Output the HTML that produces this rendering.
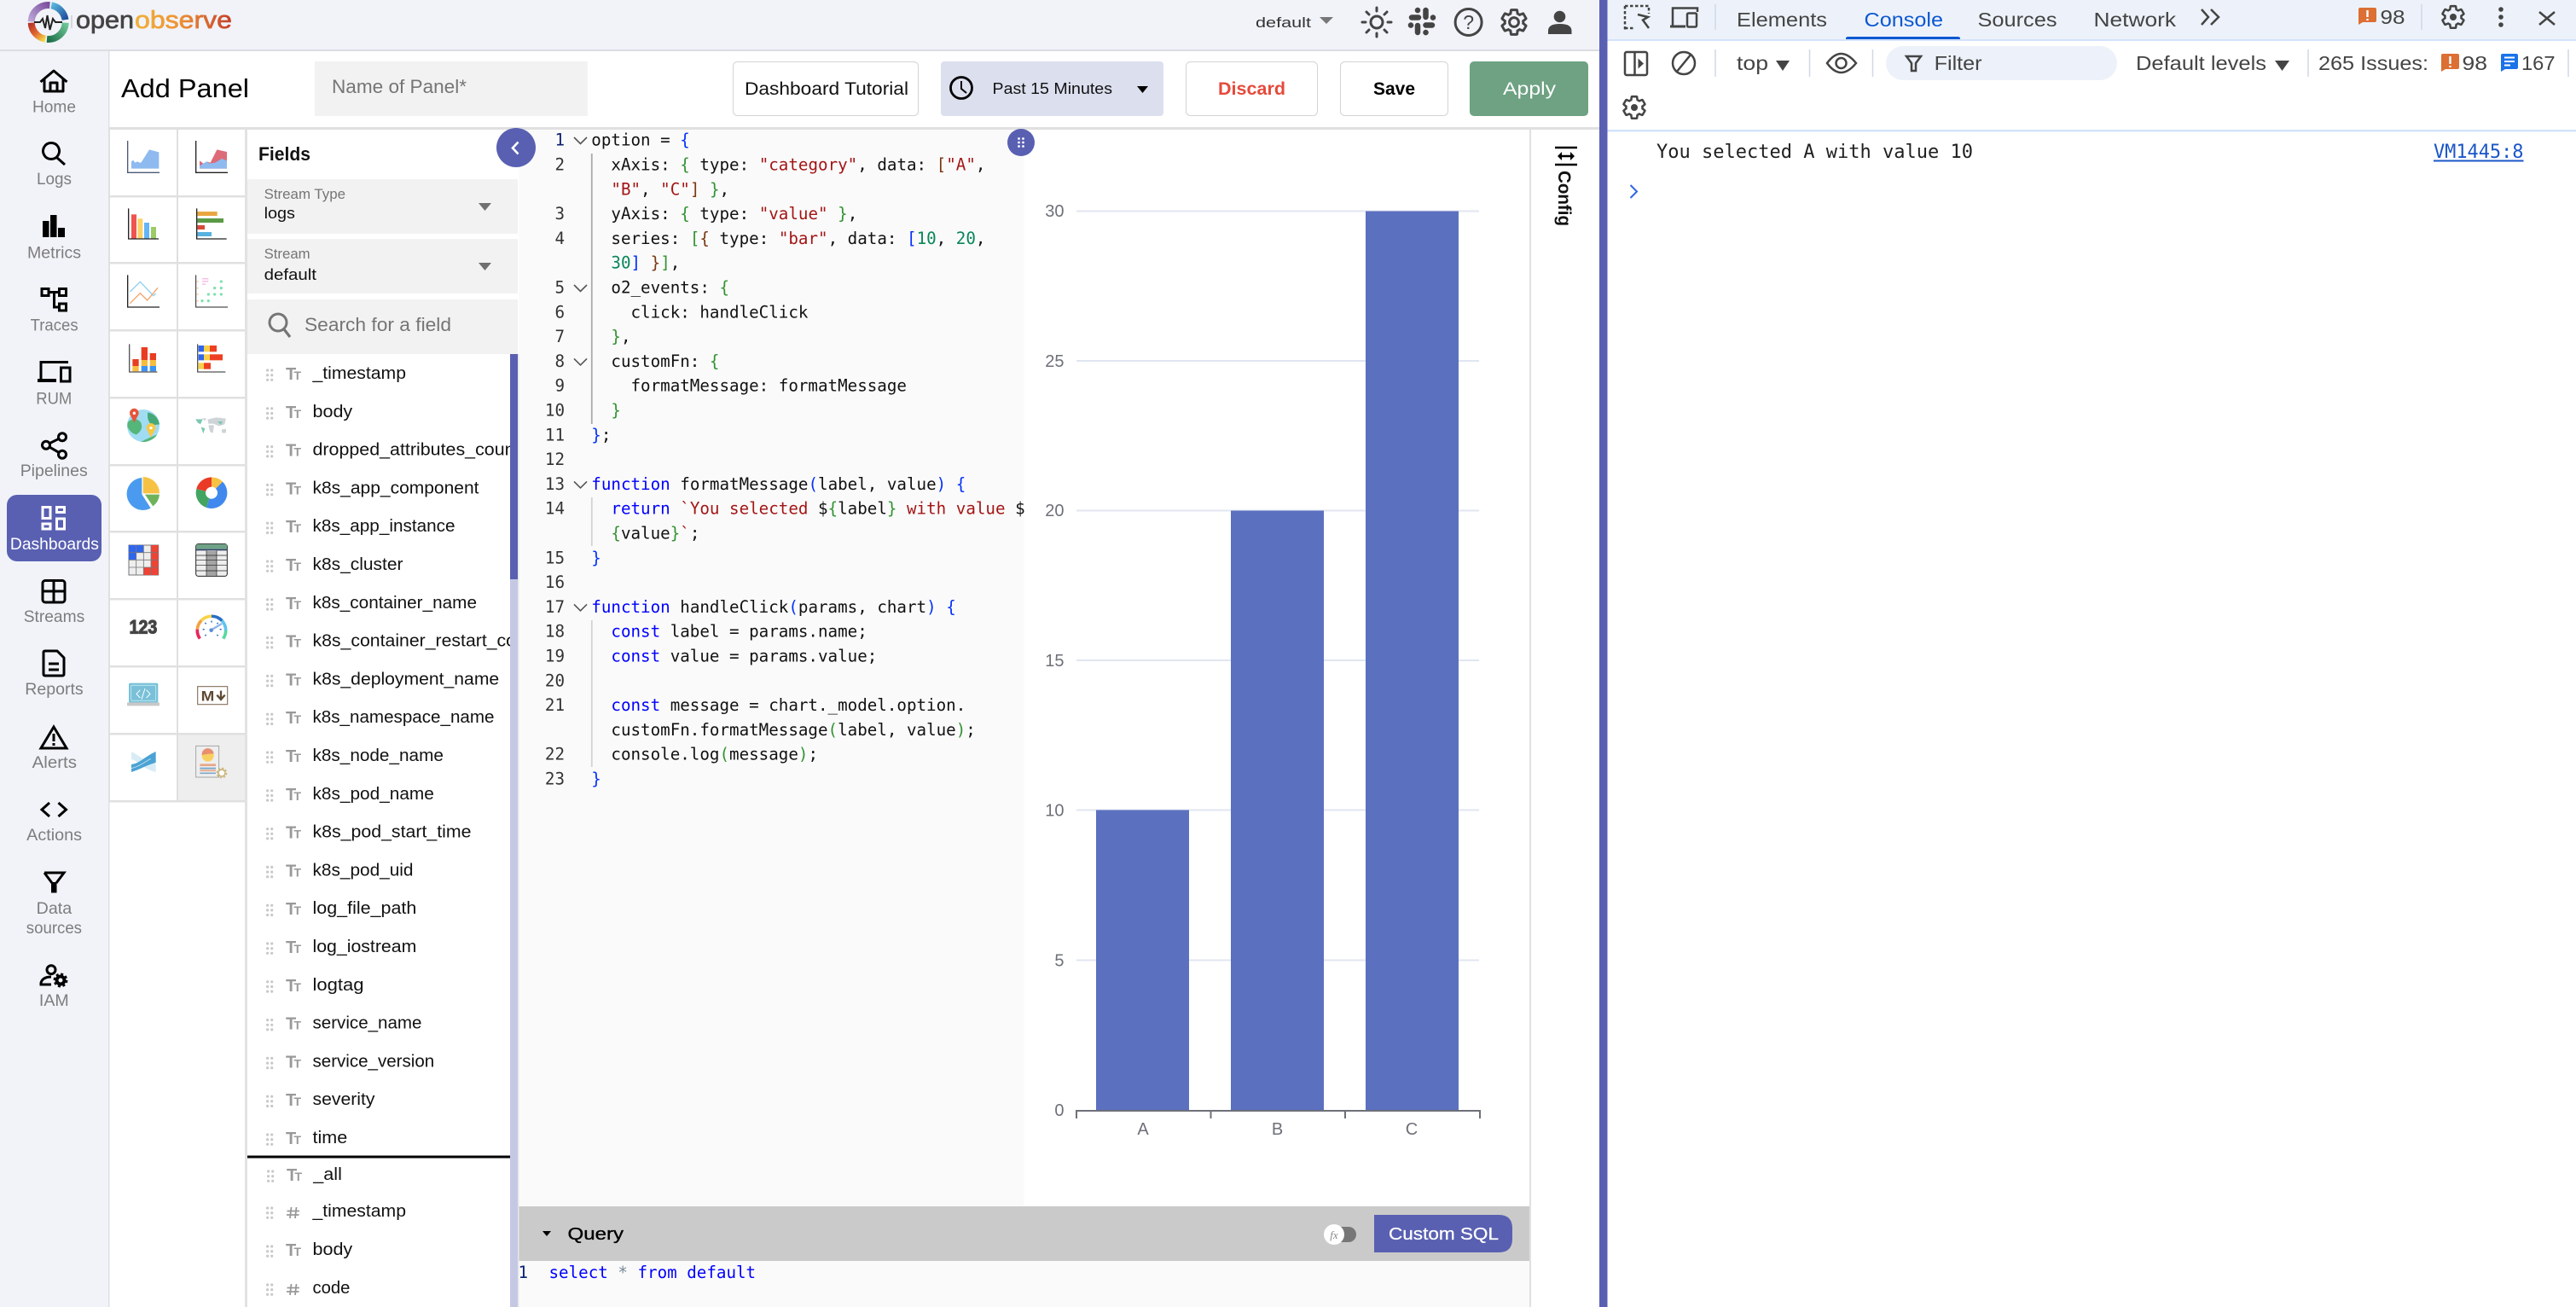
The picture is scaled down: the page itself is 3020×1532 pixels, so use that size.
<!DOCTYPE html>
<html><head><meta charset="utf-8"><title>Add Panel</title>
<style>
html,body{margin:0;padding:0;background:#fff;width:3020px;height:1532px;overflow:hidden}
svg{display:block}
text{font-family:"Liberation Sans",sans-serif}
.nav{font-size:19.5px;fill:#7d7d7d}
.f{font-size:20.5px;fill:#111}
.T{font-size:20px;fill:#999;font-weight:bold}
.t{font-size:14px;fill:#999;font-weight:bold}
.d{stroke:#c8c8c8;stroke-width:3.2;stroke-linecap:round;fill:none}
.m{font-family:"DejaVu Sans Mono","Liberation Mono",monospace;font-size:19.2px;fill:#111;white-space:pre}
.ln{font-family:"DejaVu Sans Mono","Liberation Mono",monospace;font-size:19.2px;fill:#333;text-anchor:end}
.s{fill:#a31515}.g{fill:#319331}.b{fill:#0431fa}.o{fill:#7b3814}.n{fill:#098658}.k{fill:#0000ff}
.dt{font-size:23px;fill:#444}
.ic{fill:none;stroke:#000;stroke-width:3}
.dv{fill:none;stroke:#444;stroke-width:2.5}
.sep{stroke:#d0d8e6;stroke-width:1.5}
.cy{font-size:20px;fill:#6e7079}
.fold{fill:none;stroke:#555;stroke-width:1.6}
</style></head><body>
<svg width="3020" height="1532" viewBox="0 0 3020 1532" xmlns="http://www.w3.org/2000/svg">
<defs>
<linearGradient id="lg1" x1="0" y1="0" x2="1" y2="0"><stop offset="0" stop-color="#f0b23c"/><stop offset=".45" stop-color="#ee9235"/><stop offset="1" stop-color="#c5412b"/></linearGradient>
<linearGradient id="r1" gradientUnits="userSpaceOnUse" x1="58" y1="6" x2="37" y2="25"><stop offset="0" stop-color="#7d4fa0"/><stop offset="1" stop-color="#b9a4d4"/></linearGradient>
<linearGradient id="r2" gradientUnits="userSpaceOnUse" x1="60" y1="6" x2="76" y2="23"><stop offset="0" stop-color="#5ab8de"/><stop offset="1" stop-color="#1f4f9e"/></linearGradient>
<linearGradient id="r3" gradientUnits="userSpaceOnUse" x1="77" y1="27" x2="55" y2="46"><stop offset="0" stop-color="#6fc696"/><stop offset="1" stop-color="#1b6d46"/></linearGradient>
<linearGradient id="r4" gradientUnits="userSpaceOnUse" x1="53" y1="46" x2="37" y2="27"><stop offset="0" stop-color="#f5d74a"/><stop offset=".5" stop-color="#e0672f"/><stop offset="1" stop-color="#b8352a"/></linearGradient>
<clipPath id="fc"><rect x="290" y="415" width="308" height="1117"/></clipPath>
<clipPath id="ec"><rect x="608" y="152" width="592.5" height="1262"/></clipPath>
</defs>

<!-- base -->
<rect width="3020" height="1532" fill="#fff"/>
<rect width="1875" height="58" fill="#f1f3f9"/>
<rect y="58" width="1875" height="2" fill="#dcdde3"/>
<rect y="60" width="127" height="1472" fill="#f1f3f9"/>
<rect x="127" y="60" width="1.5" height="1472" fill="#dfe0e4"/>
<rect x="128" y="149" width="1747" height="3" fill="#e0e0e0"/>

<!-- logo -->
<g fill="none" stroke-width="8">
<path d="M36.7 25.3A20 20 0 0 1 58.4 6.1" stroke="url(#r1)"/>
<path d="M60.2 6.3A20 20 0 0 1 76.5 23.2" stroke="url(#r2)"/>
<path d="M76.7 26.7A20 20 0 0 1 55 45.9" stroke="url(#r3)"/>
<path d="M53.2 45.7A20 20 0 0 1 36.7 26.7" stroke="url(#r4)"/>
</g>
<path d="M40 26H47L50 22L53 33L55.5 18L58.5 35L62 22L65 26H73" fill="none" stroke="#222" stroke-width="2"/>
<rect x="83.5" y="18" width="1" height="15" fill="#bbb"/>
<text x="89" y="33" font-size="29" fill="#444" stroke="#444" stroke-width=".7" textLength="68" lengthAdjust="spacingAndGlyphs">open</text>
<text x="158" y="33" font-size="29" fill="url(#lg1)" stroke="url(#lg1)" stroke-width=".7" textLength="114" lengthAdjust="spacingAndGlyphs">observe</text>

<!-- header right -->
<text x="1472" y="32" font-size="17" fill="#333" textLength="65" lengthAdjust="spacingAndGlyphs">default</text>
<path d="M1547 20H1563L1555 28Z" fill="#777"/>
<g fill="none" stroke="#444" stroke-width="3" stroke-linecap="round">
<circle cx="1614" cy="26" r="7"/>
<path d="M1614 9V13M1614 39V43M1597 26H1601M1627 26H1631M1602 14L1605 17M1623 35L1626 38M1626 14L1623 17M1605 35L1602 38"/>
</g>
<g fill="none" stroke="#444" stroke-width="6.5" stroke-linecap="round">
<path d="M1655 20.5H1663M1671.5 12V20M1671.5 29.5H1679M1662 30V38"/>
<path d="M1662 12V12.1M1680 20.5V20.6M1671.5 38V38.1M1654 29.5V29.6"/>
</g>
<circle cx="1721.6" cy="26" r="15.5" fill="none" stroke="#444" stroke-width="3"/>
<text x="1721.6" y="34" font-size="23" fill="#444" text-anchor="middle">?</text>
<path transform="translate(1757 8) scale(1.5)" fill="none" stroke="#444" stroke-width="2" d="M19.14 12.94c.04-.3.06-.61.06-.94 0-.32-.02-.64-.07-.94l2.03-1.58c.18-.14.23-.41.12-.61l-1.92-3.32c-.12-.22-.37-.29-.59-.22l-2.39.96c-.5-.38-1.03-.7-1.62-.94l-.36-2.54c-.04-.24-.24-.41-.48-.41h-3.84c-.24 0-.43.17-.47.41l-.36 2.54c-.59.24-1.13.57-1.62.94l-2.39-.96c-.22-.08-.47 0-.59.22L2.74 8.87c-.12.21-.08.47.12.61l2.03 1.58c-.05.3-.09.63-.09.94s.02.64.07.94l-2.03 1.58c-.18.14-.23.41-.12.61l1.92 3.32c.12.22.37.29.59.22l2.39-.96c.5.38 1.03.7 1.62.94l.36 2.54c.05.24.24.41.48.41h3.84c.24 0 .44-.17.47-.41l.36-2.54c.59-.24 1.13-.56 1.62-.94l2.39.96c.22.08.47 0 .59-.22l1.92-3.32c.12-.22.07-.47-.12-.61l-2.01-1.58zM12 15.6c-1.98 0-3.6-1.62-3.6-3.6s1.62-3.6 3.6-3.6 3.6 1.62 3.6 3.6-1.62 3.6-3.6 3.6z"/>
<circle cx="1828.5" cy="19.5" r="6.8" fill="#444"/>
<path d="M1815 40V36Q1815 28 1828.5 28Q1842.5 28 1842.5 36V40Z" fill="#444"/>

<!-- sidebar nav -->
<rect x="8" y="580" width="111" height="78" rx="12" fill="#5960b2"/>
<path class="ic" stroke-linejoin="round" d="M47.5 96L63 83L78.5 96M52 92V107H74V92M59 107V97H67V107"/>
<path class="ic" stroke-width="3.2" d="M60 167.500a9.500 9.500 0 1 0 .01 0M67 185L76 193"/>
<path d="M50 259h7.500v19H50zM59 252h7.500v26H59zM68 267h8v11h-8z" fill="#000"/>
<path class="ic" d="M49 338.500h8v8h-8zM69.500 338.500h8v8h-8zM69.500 356h8v8h-8zM57 342.500H69.500M63.500 342.500V360H69.500"/>
<path class="ic" d="M48 445V424.500H80"/><path d="M44 444h22v4H44z" fill="#000"/><rect x="71.500" y="431" width="10.500" height="16" fill="none" stroke="#000" stroke-width="3"/>
<path class="ic" d="M54 521.700L73 512.300M54 521.700L73 532.700"/><circle cx="54" cy="521.700" r="4.500" fill="#f1f3f9" stroke="#000" stroke-width="3"/><circle cx="73" cy="512.300" r="4.500" fill="#f1f3f9" stroke="#000" stroke-width="3"/><circle cx="73" cy="532.700" r="4.500" fill="#f1f3f9" stroke="#000" stroke-width="3"/>
<path fill="none" stroke="#fff" stroke-width="3" d="M50 594.500h9v13h-9zM66.500 594.500h9v6h-9zM50 614h9v6h-9zM66.500 608h9v12h-9z"/>
<rect x="50" y="680.500" width="26" height="25.500" rx="3" class="ic"/><path class="ic" d="M63 680V706M50 693H76"/>
<path class="ic" stroke-linejoin="round" d="M51 765q0-2 2-2H67L75 771V790q0 2-2 2H53q-2 0-2-2ZM57 778H69M57 785H69"/>
<path class="ic" stroke-linejoin="miter" d="M63 852L48 877H78ZM63 860V869M63 871V874"/>
<path class="ic" stroke-width="3.200" d="M58 941L49 949L58 957M68.500 941L77.500 949L68.500 957"/>
<path class="ic" d="M52 1023H75L66 1035"/><path class="ic" d="M52 1023L61 1035"/><path d="M60 1034h6.500v12.500h-6.500z" fill="#000"/>
<circle cx="60" cy="1136.700" r="5" class="ic"/><path class="ic" d="M60 1145Q50 1145 48 1152V1154H60"/>
<circle cx="71" cy="1149" r="4.500" fill="none" stroke="#000" stroke-width="4"/><circle cx="71" cy="1149" r="7.200" fill="none" stroke="#000" stroke-width="2.500" stroke-dasharray="3 2.650"/>

<text class="nav" x="38" y="131.700" textLength="51" lengthAdjust="spacingAndGlyphs">Home</text>
<text class="nav" x="43" y="216" textLength="41" lengthAdjust="spacingAndGlyphs">Logs</text>
<text class="nav" x="32" y="302.300" textLength="63" lengthAdjust="spacingAndGlyphs">Metrics</text>
<text class="nav" x="35.600" y="387.700" textLength="56" lengthAdjust="spacingAndGlyphs">Traces</text>
<text class="nav" x="42.300" y="473.300" textLength="42" lengthAdjust="spacingAndGlyphs">RUM</text>
<text class="nav" x="23.700" y="558" textLength="79" lengthAdjust="spacingAndGlyphs">Pipelines</text>
<text class="nav" x="11.900" y="644" textLength="104" lengthAdjust="spacingAndGlyphs" style="fill:#fff">Dashboards</text>
<text class="nav" x="27.700" y="729" textLength="71.500" lengthAdjust="spacingAndGlyphs">Streams</text>
<text class="nav" x="29.300" y="814" textLength="68.400" lengthAdjust="spacingAndGlyphs">Reports</text>
<text class="nav" x="37.600" y="900" textLength="52.400" lengthAdjust="spacingAndGlyphs">Alerts</text>
<text class="nav" x="31.200" y="985" textLength="64.800" lengthAdjust="spacingAndGlyphs">Actions</text>
<text class="nav" x="42.700" y="1071" textLength="41.500" lengthAdjust="spacingAndGlyphs">Data</text>
<text class="nav" x="30.800" y="1094" textLength="65.200" lengthAdjust="spacingAndGlyphs">sources</text>
<text class="nav" x="45.900" y="1179" textLength="34.800" lengthAdjust="spacingAndGlyphs">IAM</text>

<!-- sub header -->
<text x="142" y="114" font-size="31" fill="#000" textLength="150" lengthAdjust="spacingAndGlyphs">Add Panel</text>
<rect x="369" y="72" width="320" height="64" fill="#f2f2f2"/>
<text x="389" y="109" font-size="22" fill="#757575" textLength="158" lengthAdjust="spacingAndGlyphs">Name of Panel*</text>
<rect x="859.500" y="72.500" width="217" height="63" rx="5" fill="#fff" stroke="#d4d4d4"/>
<text x="873" y="111" font-size="21" fill="#111" textLength="192" lengthAdjust="spacingAndGlyphs">Dashboard Tutorial</text>
<rect x="1103" y="72" width="261" height="64" rx="4" fill="#dcdfee"/>
<circle cx="1127" cy="103" r="12.500" fill="none" stroke="#000" stroke-width="2.800"/><path d="M1127 95V104L1133 109" fill="none" stroke="#000" stroke-width="2"/>
<text x="1163.500" y="110" font-size="18" fill="#111" textLength="140.500" lengthAdjust="spacingAndGlyphs">Past 15 Minutes</text>
<path d="M1333 101H1346L1339.500 109Z" fill="#000"/>
<rect x="1390.500" y="72.500" width="154" height="63" rx="5" fill="#fff" stroke="#d4d4d4"/>
<text x="1428" y="111" font-size="21" font-weight="bold" fill="#e64a3b" textLength="79" lengthAdjust="spacingAndGlyphs">Discard</text>
<rect x="1571.500" y="72.500" width="126" height="63" rx="5" fill="#fff" stroke="#d4d4d4"/>
<text x="1610" y="111" font-size="21" font-weight="bold" fill="#000" textLength="49" lengthAdjust="spacingAndGlyphs">Save</text>
<rect x="1723" y="72" width="139" height="64" rx="5" fill="#6ea283"/>
<text x="1762" y="111" font-size="21" fill="#fff" textLength="62" lengthAdjust="spacingAndGlyphs">Apply</text>

<!-- chart type grid -->
<rect x="127" y="152" width="2" height="788" fill="#e0e0e0"/>
<rect x="207" y="152" width="2" height="788" fill="#e0e0e0"/>
<rect x="287" y="152" width="3" height="1380" fill="#e2e2e2"/>
<rect x="209" y="861" width="78" height="77" fill="#eeeeee"/>
<g fill="#e0e0e0">
<rect x="127" y="229" width="160" height="2.500"/><rect x="127" y="307" width="160" height="2.500"/><rect x="127" y="386" width="160" height="2.500"/><rect x="127" y="465" width="160" height="2.500"/><rect x="127" y="544" width="160" height="2.500"/><rect x="127" y="622" width="160" height="2.500"/><rect x="127" y="701" width="160" height="2.500"/><rect x="127" y="780" width="160" height="2.500"/><rect x="127" y="859" width="160" height="2.500"/><rect x="127" y="938" width="160" height="2.500"/>
</g>

<g transform="translate(125 150) scale(.33333)">
<path d="M87 143V118L93 113L100 122L108 118L120 123L130 108L150 76L184 85V143Z" fill="#8ebaf0"/>
<path d="M74 45V157H186" fill="none" stroke="#4a5a78" stroke-width="4"/>
<path d="M327 130V115L340 125L352 118L365 122L388 76L423 84V143H327Z" fill="#dd6b77"/>
<path d="M327 143V133L340 125L352 118L362 125L382 122L405 108L423 115V143Z" fill="#8ebaf0"/>
<path d="M314 45V157H426" fill="none" stroke="#222" stroke-width="4"/>

<rect x="87" y="304" width="18" height="85" fill="#ef5350"/><rect x="109" y="319" width="18" height="70" fill="#fbd26a"/><rect x="132" y="333" width="18" height="56" fill="#64b5f6"/><rect x="156" y="348" width="18" height="41" fill="#9ccc65"/>
<path d="M77 283V390H183" fill="none" stroke="#222" stroke-width="4"/>
<rect x="319" y="294" width="70" height="15" fill="#e8a740"/><rect x="319" y="318" width="92" height="15" fill="#5b9a45"/><rect x="319" y="342" width="26" height="15" fill="#d84a3a"/><rect x="319" y="366" width="50" height="15" fill="#58b2e0"/>
<path d="M317 283V390H422" fill="none" stroke="#222" stroke-width="4"/>

<path d="M82 576L118 541L165 590L173 582" fill="none" stroke="#8fd0f0" stroke-width="4"/>
<path d="M82 617L118 581L143 606L180 562" fill="none" stroke="#f2a36a" stroke-width="4"/>
<path d="M74 517V630H186" fill="none" stroke="#222" stroke-width="4"/>
<g fill="#f6bfe6"><rect x="336" y="528" width="22" height="4.500"/><rect x="336" y="537" width="22" height="4.500"/><rect x="336" y="547" width="12" height="4.500"/></g>
<g fill="#f8d8a8"><rect x="315" y="538" width="9" height="4"/><rect x="315" y="561" width="9" height="4"/><rect x="315" y="583" width="9" height="4"/><rect x="315" y="606" width="9" height="4"/></g>
<g fill="#7fe0b0"><circle cx="403" cy="540" r="5"/><circle cx="380" cy="563" r="5"/><circle cx="403" cy="563" r="5"/><circle cx="358" cy="585" r="5"/><circle cx="380" cy="585" r="5"/><circle cx="403" cy="585" r="5"/><circle cx="336" cy="608" r="5"/><circle cx="358" cy="608" r="5"/></g>
<path d="M314 517V630H426" fill="none" stroke="#222" stroke-width="3"/>

<g>
<rect x="91" y="813" width="22" height="24" fill="#e83d22"/><rect x="91" y="837" width="22" height="19" fill="#f7bd3f"/>
<rect x="122" y="771" width="22" height="45" fill="#e83d22"/><rect x="122" y="816" width="22" height="21" fill="#f7bd3f"/><rect x="122" y="837" width="22" height="19" fill="#3d94f0"/>
<rect x="152" y="792" width="22" height="24" fill="#e83d22"/><rect x="152" y="816" width="22" height="21" fill="#f7bd3f"/><rect x="152" y="837" width="22" height="19" fill="#3d94f0"/>
</g>
<path d="M80 760V858H178" fill="none" stroke="#555" stroke-width="4"/>
<g>
<rect x="323" y="765" width="19" height="22" fill="#2f66ee"/><rect x="342" y="765" width="21" height="22" fill="#f7d04a"/><rect x="363" y="765" width="24" height="22" fill="#ee3f22"/>
<rect x="323" y="796" width="19" height="21" fill="#2f66ee"/><rect x="342" y="796" width="21" height="21" fill="#f7d04a"/><rect x="363" y="796" width="45" height="21" fill="#ee3f22"/>
<rect x="323" y="826" width="19" height="22" fill="#f7d04a"/><rect x="342" y="826" width="24" height="22" fill="#ee3f22"/>
</g>
<path d="M320 760V858H418" fill="none" stroke="#555" stroke-width="4"/>

<circle cx="129" cy="1047" r="57" fill="#a0dcf2"/>
<path d="M74 1035Q100 1012 120 1035Q132 1060 105 1078Q85 1075 73 1050Z" fill="#55b67a"/>
<path d="M145 1000Q180 1008 186 1042L160 1045Q140 1030 145 1000Z" fill="#46a878"/>
<path d="M120 1104Q150 1088 178 1078Q165 1098 135 1104Z" fill="#55b67a"/>
<path d="M97 1036L83 1010A16 16 0 1 1 111 1010Z" fill="#e8543a"/><circle cx="97" cy="1003" r="5" fill="#fff"/>
<path d="M156 1088L142 1062A16 16 0 1 1 170 1062Z" fill="#f8c845"/><circle cx="156" cy="1055" r="5" fill="#fff"/>

<g fill="#cfd4d8">
<path d="M355 1025L385 1018L420 1022L415 1042L395 1048L375 1040L358 1040Z"/>
<path d="M358 1045L378 1045L374 1072L364 1070Z"/>
<path d="M405 1060L420 1058L420 1072L405 1072Z"/>
<path d="M335 1020L352 1022L345 1030Z"/>
</g>
<g fill="#7cc8b0">
<path d="M313 1024L338 1024L330 1042L320 1036Z"/>
<path d="M332 1052L346 1056L340 1075Z"/>
<path d="M390 1032L408 1032L402 1044Z"/>
</g>
</g>

<g transform="translate(125 540) scale(.33333)">
<path d="M124 60A57 57 0 1 0 155 167L124 118Z" fill="#4a9bef"/>
<path d="M128 57A58 58 0 0 1 186 115H128Z" fill="#f7c244"/>
<path d="M135 119H186A58 58 0 0 1 163 160Z" fill="#6db35c"/>
<g fill="none" stroke-width="34">
<path d="M369 75A38 38 0 0 1 395.900 86.100" stroke="#f7c244"/>
<path d="M395.900 86.100A38 38 0 0 1 356 148.700" stroke="#4188ee"/>
<path d="M356 148.700A38 38 0 0 1 332.300 103.200" stroke="#42a561"/>
<path d="M332.300 103.200A38 38 0 0 1 369 75" stroke="#e93b26"/>
</g>
<!-- heatmap -->
<rect x="78" y="297" width="104" height="105" fill="#eee" stroke="#777" stroke-width="3"/>
<g fill="#2f66ee"><rect x="78" y="297" width="26" height="26"/><rect x="104" y="297" width="26" height="26"/><rect x="78" y="323" width="26" height="26"/></g>
<g fill="#ee4336"><rect x="156" y="297" width="26" height="26"/><rect x="156" y="323" width="26" height="26"/><rect x="156" y="349" width="26" height="26"/><rect x="156" y="375" width="26" height="27"/><rect x="130" y="375" width="26" height="27"/></g>
<path d="M104 297V402M130 297V402M156 297V402M78 323H182M78 349H182M78 375H182" stroke="#777" stroke-width="2.500" fill="none"/>
<!-- table -->
<rect x="314" y="293" width="110" height="113" rx="8" fill="#eee" stroke="#222" stroke-width="3"/>
<path d="M316 296q0-2 6-2H417q6 0 6 2V311H316Z" fill="#6fa287"/>
<rect x="315" y="311" width="108" height="5" fill="#334066"/>
<rect x="351" y="318" width="36" height="87" fill="#a5a5a5"/>
<path d="M315 333H423M315 350H423M315 368H423M315 387H423M351 316V405M387 316V405" stroke="#222" stroke-width="2" fill="none"/>
<!-- 123 -->
<text x="80" y="608" font-size="66" font-weight="bold" fill="#444" stroke="#444" stroke-width="3.500" textLength="98" lengthAdjust="spacingAndGlyphs">123</text>
<!-- gauge -->
<g fill="none" stroke-width="11">
<path d="M328 625.700A50 50 0 0 1 319 593" stroke="#e8265e"/>
<path d="M319 593A50 50 0 0 1 333.600 561.600" stroke="#f5a142"/>
<path d="M333.600 561.600A50 50 0 0 1 369 547" stroke="#f8d348"/>
<path d="M369 547A50 50 0 0 1 406 563" stroke="#2a6fc4"/>
<path d="M406 563A50 50 0 0 1 419 597" stroke="#5cc5ee"/>
<path d="M419 597A50 50 0 0 1 410 625.700" stroke="#58d8a0"/>
</g>
<path d="M338 593h6M369 563v6M346 570l4 4M392 570l-4 4M398 593h6M346 616l4-4M392 616l-4-4" stroke="#1e5fb4" stroke-width="4" fill="none"/>
<path d="M365 597L405 573" stroke="#8fb5e8" stroke-width="7" fill="none"/><circle cx="368" cy="596" r="7" fill="#5c8fd8"/>
<!-- code -->
<rect x="78" y="782" width="103" height="70" rx="6" fill="#79c0d8"/>
<rect x="86" y="790" width="87" height="54" rx="3" fill="none" stroke="#c4ecf4" stroke-width="2.500"/>
<path d="M118 806L105 820L118 834M140 806L153 820L140 834M135 801L123 839" fill="none" stroke="#fff" stroke-width="3"/>
<rect x="72" y="850" width="114" height="12" rx="2" fill="#c8c8c8"/>
<!-- md -->
<rect x="320" y="794" width="105" height="63" fill="#fff" stroke="#8b7560" stroke-width="3.500"/>
<text x="332" y="845" font-size="50" font-weight="bold" fill="#5e4a32" textLength="47" lengthAdjust="spacingAndGlyphs">M</text>
<path d="M402 809V835M388 824L402 840L416 824" fill="none" stroke="#5e4a32" stroke-width="7"/>
<!-- sankey -->
<path d="M87 1024C110 1030 130 1060 173 1066V1095C130 1085 110 1055 87 1050Z" fill="#d8ecf6"/>
<path d="M87 1068C115 1065 135 1040 173 1023V1062C140 1070 120 1085 87 1095Z" fill="#4ba3d4"/>
<path d="M87 1082C115 1075 130 1062 155 1048" fill="none" stroke="#c0e2f2" stroke-width="2.500"/>
<!-- custom -->
<rect x="314" y="1003" width="81" height="110" fill="#eeeeee" stroke="#999" stroke-width="2.500"/>
<circle cx="356" cy="1037" r="21" fill="#f8d060"/>
<path d="M335 1035A21 21 0 0 1 377 1030Q356 1030 335 1035Z" fill="#e88f70"/>
<path d="M328 1070H384" stroke="#e8a585" stroke-width="8"/><path d="M328 1082H384" stroke="#7fa9c8" stroke-width="6"/><path d="M328 1090H384" stroke="#e8a585" stroke-width="5"/><path d="M328 1099H384" stroke="#7fa9c8" stroke-width="5"/>
<circle cx="405" cy="1098" r="12" fill="#fff" stroke="#c8b478" stroke-width="5"/><circle cx="405" cy="1098" r="17" fill="none" stroke="#c8b478" stroke-width="4" stroke-dasharray="7 6.300"/>
</g>

<!-- Fields panel -->
<text x="303" y="188" font-size="22.500" font-weight="bold" fill="#111" textLength="61" lengthAdjust="spacingAndGlyphs">Fields</text>
<rect x="290" y="210" width="317" height="64" fill="#f2f2f2"/>
<text x="309.600" y="233" font-size="17" fill="#757575" textLength="95.400" lengthAdjust="spacingAndGlyphs">Stream Type</text>
<text x="309.600" y="256" font-size="18.500" fill="#111" textLength="36.400" lengthAdjust="spacingAndGlyphs">logs</text>
<path d="M561 238H576L568.500 247Z" fill="#707070"/>
<rect x="290" y="280" width="317" height="64" fill="#f2f2f2"/>
<text x="309.600" y="303" font-size="17" fill="#757575" textLength="54" lengthAdjust="spacingAndGlyphs">Stream</text>
<text x="309.600" y="328" font-size="18.500" fill="#111" textLength="61.400" lengthAdjust="spacingAndGlyphs">default</text>
<path d="M561 308H576L568.500 317Z" fill="#707070"/>
<rect x="290" y="351" width="317" height="64" fill="#f2f2f2"/>
<circle cx="326" cy="378" r="10" fill="none" stroke="#757575" stroke-width="3"/><path d="M333 386L340 395" stroke="#757575" stroke-width="3.200" fill="none"/>
<text x="357" y="388" font-size="22" fill="#757575" textLength="172" lengthAdjust="spacingAndGlyphs">Search for a field</text>
<rect x="598" y="415" width="9" height="1117" fill="#c5c8e3"/>
<rect x="598" y="415" width="9" height="264" fill="#5960b2"/>
<rect x="607" y="415" width="1.500" height="1117" fill="#e6e6e6"/>

<g clip-path="url(#fc)">
<g transform="translate(0 444)"><path class="d" d="M313.600-10v.01M318.700-10v.01M313.600-4.300v.01M318.700-4.300v.01M313.600 1.300v.01M318.700 1.300v.01"/><text class="T" x="335" y="1">T</text><text class="t" x="344.500" y="1">T</text><text class="f" x="366.500" textLength="109.500" lengthAdjust="spacingAndGlyphs">_timestamp</text></g>
<g transform="translate(0 488.800)"><path class="d" d="M313.600-10v.01M318.700-10v.01M313.600-4.300v.01M318.700-4.300v.01M313.600 1.300v.01M318.700 1.300v.01"/><text class="T" x="335" y="1">T</text><text class="t" x="344.500" y="1">T</text><text class="f" x="366.500" textLength="46.700" lengthAdjust="spacingAndGlyphs">body</text></g>
<g transform="translate(0 533.600)"><path class="d" d="M313.600-10v.01M318.700-10v.01M313.600-4.300v.01M318.700-4.300v.01M313.600 1.300v.01M318.700 1.300v.01"/><text class="T" x="335" y="1">T</text><text class="t" x="344.500" y="1">T</text><text class="f" x="366.500" textLength="243" lengthAdjust="spacingAndGlyphs">dropped_attributes_count</text></g>
<g transform="translate(0 578.400)"><path class="d" d="M313.600-10v.01M318.700-10v.01M313.600-4.300v.01M318.700-4.300v.01M313.600 1.300v.01M318.700 1.300v.01"/><text class="T" x="335" y="1">T</text><text class="t" x="344.500" y="1">T</text><text class="f" x="366.500" textLength="195" lengthAdjust="spacingAndGlyphs">k8s_app_component</text></g>
<g transform="translate(0 623.200)"><path class="d" d="M313.600-10v.01M318.700-10v.01M313.600-4.300v.01M318.700-4.300v.01M313.600 1.300v.01M318.700 1.300v.01"/><text class="T" x="335" y="1">T</text><text class="t" x="344.500" y="1">T</text><text class="f" x="366.500" textLength="167" lengthAdjust="spacingAndGlyphs">k8s_app_instance</text></g>
<g transform="translate(0 668)"><path class="d" d="M313.600-10v.01M318.700-10v.01M313.600-4.300v.01M318.700-4.300v.01M313.600 1.300v.01M318.700 1.300v.01"/><text class="T" x="335" y="1">T</text><text class="t" x="344.500" y="1">T</text><text class="f" x="366.500" textLength="106" lengthAdjust="spacingAndGlyphs">k8s_cluster</text></g>
<g transform="translate(0 712.800)"><path class="d" d="M313.600-10v.01M318.700-10v.01M313.600-4.300v.01M318.700-4.300v.01M313.600 1.300v.01M318.700 1.300v.01"/><text class="T" x="335" y="1">T</text><text class="t" x="344.500" y="1">T</text><text class="f" x="366.500" textLength="192.500" lengthAdjust="spacingAndGlyphs">k8s_container_name</text></g>
<g transform="translate(0 757.600)"><path class="d" d="M313.600-10v.01M318.700-10v.01M313.600-4.300v.01M318.700-4.300v.01M313.600 1.300v.01M318.700 1.300v.01"/><text class="T" x="335" y="1">T</text><text class="t" x="344.500" y="1">T</text><text class="f" x="366.500" textLength="268" lengthAdjust="spacingAndGlyphs">k8s_container_restart_count</text></g>
<g transform="translate(0 802.400)"><path class="d" d="M313.600-10v.01M318.700-10v.01M313.600-4.300v.01M318.700-4.300v.01M313.600 1.300v.01M318.700 1.300v.01"/><text class="T" x="335" y="1">T</text><text class="t" x="344.500" y="1">T</text><text class="f" x="366.500" textLength="218.700" lengthAdjust="spacingAndGlyphs">k8s_deployment_name</text></g>
<g transform="translate(0 847.200)"><path class="d" d="M313.600-10v.01M318.700-10v.01M313.600-4.300v.01M318.700-4.300v.01M313.600 1.300v.01M318.700 1.300v.01"/><text class="T" x="335" y="1">T</text><text class="t" x="344.500" y="1">T</text><text class="f" x="366.500" textLength="213" lengthAdjust="spacingAndGlyphs">k8s_namespace_name</text></g>
<g transform="translate(0 892)"><path class="d" d="M313.600-10v.01M318.700-10v.01M313.600-4.300v.01M318.700-4.300v.01M313.600 1.300v.01M318.700 1.300v.01"/><text class="T" x="335" y="1">T</text><text class="t" x="344.500" y="1">T</text><text class="f" x="366.500" textLength="153.400" lengthAdjust="spacingAndGlyphs">k8s_node_name</text></g>
<g transform="translate(0 936.800)"><path class="d" d="M313.600-10v.01M318.700-10v.01M313.600-4.300v.01M318.700-4.300v.01M313.600 1.300v.01M318.700 1.300v.01"/><text class="T" x="335" y="1">T</text><text class="t" x="344.500" y="1">T</text><text class="f" x="366.500" textLength="142.300" lengthAdjust="spacingAndGlyphs">k8s_pod_name</text></g>
<g transform="translate(0 981.600)"><path class="d" d="M313.600-10v.01M318.700-10v.01M313.600-4.300v.01M318.700-4.300v.01M313.600 1.300v.01M318.700 1.300v.01"/><text class="T" x="335" y="1">T</text><text class="t" x="344.500" y="1">T</text><text class="f" x="366.500" textLength="186" lengthAdjust="spacingAndGlyphs">k8s_pod_start_time</text></g>
<g transform="translate(0 1026.400)"><path class="d" d="M313.600-10v.01M318.700-10v.01M313.600-4.300v.01M318.700-4.300v.01M313.600 1.300v.01M318.700 1.300v.01"/><text class="T" x="335" y="1">T</text><text class="t" x="344.500" y="1">T</text><text class="f" x="366.500" textLength="118" lengthAdjust="spacingAndGlyphs">k8s_pod_uid</text></g>
<g transform="translate(0 1071.200)"><path class="d" d="M313.600-10v.01M318.700-10v.01M313.600-4.300v.01M318.700-4.300v.01M313.600 1.300v.01M318.700 1.300v.01"/><text class="T" x="335" y="1">T</text><text class="t" x="344.500" y="1">T</text><text class="f" x="366.500" textLength="121.800" lengthAdjust="spacingAndGlyphs">log_file_path</text></g>
<g transform="translate(0 1116)"><path class="d" d="M313.600-10v.01M318.700-10v.01M313.600-4.300v.01M318.700-4.300v.01M313.600 1.300v.01M318.700 1.300v.01"/><text class="T" x="335" y="1">T</text><text class="t" x="344.500" y="1">T</text><text class="f" x="366.500" textLength="121.800" lengthAdjust="spacingAndGlyphs">log_iostream</text></g>
<g transform="translate(0 1160.800)"><path class="d" d="M313.600-10v.01M318.700-10v.01M313.600-4.300v.01M318.700-4.300v.01M313.600 1.300v.01M318.700 1.300v.01"/><text class="T" x="335" y="1">T</text><text class="t" x="344.500" y="1">T</text><text class="f" x="366.500" textLength="60" lengthAdjust="spacingAndGlyphs">logtag</text></g>
<g transform="translate(0 1205.600)"><path class="d" d="M313.600-10v.01M318.700-10v.01M313.600-4.300v.01M318.700-4.300v.01M313.600 1.300v.01M318.700 1.300v.01"/><text class="T" x="335" y="1">T</text><text class="t" x="344.500" y="1">T</text><text class="f" x="366.500" textLength="128" lengthAdjust="spacingAndGlyphs">service_name</text></g>
<g transform="translate(0 1250.400)"><path class="d" d="M313.600-10v.01M318.700-10v.01M313.600-4.300v.01M318.700-4.300v.01M313.600 1.300v.01M318.700 1.300v.01"/><text class="T" x="335" y="1">T</text><text class="t" x="344.500" y="1">T</text><text class="f" x="366.500" textLength="142.700" lengthAdjust="spacingAndGlyphs">service_version</text></g>
<g transform="translate(0 1295.200)"><path class="d" d="M313.600-10v.01M318.700-10v.01M313.600-4.300v.01M318.700-4.300v.01M313.600 1.300v.01M318.700 1.300v.01"/><text class="T" x="335" y="1">T</text><text class="t" x="344.500" y="1">T</text><text class="f" x="366.500" textLength="73" lengthAdjust="spacingAndGlyphs">severity</text></g>
<g transform="translate(0 1340)"><path class="d" d="M313.600-10v.01M318.700-10v.01M313.600-4.300v.01M318.700-4.300v.01M313.600 1.300v.01M318.700 1.300v.01"/><text class="T" x="335" y="1">T</text><text class="t" x="344.500" y="1">T</text><text class="f" x="366.500" textLength="40.700" lengthAdjust="spacingAndGlyphs">time</text></g>
<rect x="290" y="1354.500" width="308" height="3" fill="#000"/>
<g transform="translate(1 1383)"><path class="d" d="M313.600-10v.01M318.700-10v.01M313.600-4.300v.01M318.700-4.300v.01M313.600 1.300v.01M318.700 1.300v.01"/><text class="T" x="335" y="1">T</text><text class="t" x="344.500" y="1">T</text><text class="f" x="366.300" textLength="33.600" lengthAdjust="spacingAndGlyphs">_all</text></g>
<g transform="translate(0 1426)"><path class="d" d="M313.600-10v.01M318.700-10v.01M313.600-4.300v.01M318.700-4.300v.01M313.600 1.300v.01M318.700 1.300v.01"/><path d="M341.500-11L340 2M347.500-11L346 2M336.500-6.500H351M336-2H350.500" stroke="#999" stroke-width="1.800" fill="none"/><text class="f" x="366.500" textLength="109.500" lengthAdjust="spacingAndGlyphs">_timestamp</text></g>
<g transform="translate(0 1471)"><path class="d" d="M313.600-10v.01M318.700-10v.01M313.600-4.300v.01M318.700-4.300v.01M313.600 1.300v.01M318.700 1.300v.01"/><text class="T" x="335" y="1">T</text><text class="t" x="344.500" y="1">T</text><text class="f" x="366.500" textLength="46.700" lengthAdjust="spacingAndGlyphs">body</text></g>
<g transform="translate(0 1516)"><path class="d" d="M313.600-10v.01M318.700-10v.01M313.600-4.300v.01M318.700-4.300v.01M313.600 1.300v.01M318.700 1.300v.01"/><path d="M341.500-11L340 2M347.500-11L346 2M336.500-6.500H351M336-2H350.500" stroke="#999" stroke-width="1.800" fill="none"/><text class="f" x="366.500" textLength="43.900" lengthAdjust="spacingAndGlyphs">code</text></g>
</g>

<!-- editor -->
<rect x="608.500" y="152" width="592" height="1262" fill="#fafafa"/>
<g stroke-width="1.800" fill="none">
<path d="M693.800 180V497" stroke="#aaaaaa"/>
<path d="M693.800 583V640M693.800 727V899" stroke="#d3d3d3"/>
</g>
<path class="fold" d="M673 161L680.500 168.500L688 161M673 334L680.500 341.500L688 334M673 420.400L680.500 427.900L688 420.400M673 564.400L680.500 571.900L688 564.400M673 708.400L680.500 715.900L688 708.400"/>
<g>
<text class="ln" x="662" y="170.700" style="fill:#0b216f">1</text>
<text class="ln" x="662" y="199.500">2</text>
<text class="ln" x="662" y="257.100">3</text>
<text class="ln" x="662" y="285.900">4</text>
<text class="ln" x="662" y="343.500">5</text>
<text class="ln" x="662" y="372.300">6</text>
<text class="ln" x="662" y="401.100">7</text>
<text class="ln" x="662" y="429.900">8</text>
<text class="ln" x="662" y="458.700">9</text>
<text class="ln" x="662" y="487.500">10</text>
<text class="ln" x="662" y="516.300">11</text>
<text class="ln" x="662" y="545.100">12</text>
<text class="ln" x="662" y="573.900">13</text>
<text class="ln" x="662" y="602.700">14</text>
<text class="ln" x="662" y="660.300">15</text>
<text class="ln" x="662" y="689.100">16</text>
<text class="ln" x="662" y="717.900">17</text>
<text class="ln" x="662" y="746.700">18</text>
<text class="ln" x="662" y="775.500">19</text>
<text class="ln" x="662" y="804.300">20</text>
<text class="ln" x="662" y="833.100">21</text>
<text class="ln" x="662" y="890.700">22</text>
<text class="ln" x="662" y="919.500">23</text>
</g>
<g clip-path="url(#ec)">
<text class="m" x="693.300" y="170.700">option = <tspan class="b">{</tspan></text>
<text class="m" x="716.400" y="199.500">xAxis: <tspan class="g">{</tspan> type: <tspan class="s">"category"</tspan>, data: <tspan class="o">[</tspan><tspan class="s">"A"</tspan>,</text>
<text class="m" x="716.400" y="228.300"><tspan class="s">"B"</tspan>, <tspan class="s">"C"</tspan><tspan class="o">]</tspan> <tspan class="g">}</tspan>,</text>
<text class="m" x="716.400" y="257.100">yAxis: <tspan class="g">{</tspan> type: <tspan class="s">"value"</tspan> <tspan class="g">}</tspan>,</text>
<text class="m" x="716.400" y="285.900">series: <tspan class="g">[</tspan><tspan class="o">{</tspan> type: <tspan class="s">"bar"</tspan>, data: <tspan class="b">[</tspan><tspan class="n">10</tspan>, <tspan class="n">20</tspan>,</text>
<text class="m" x="716.400" y="314.700"><tspan class="n">30</tspan><tspan class="b">]</tspan> <tspan class="o">}</tspan><tspan class="g">]</tspan>,</text>
<text class="m" x="716.400" y="343.500">o2_events: <tspan class="g">{</tspan></text>
<text class="m" x="739.500" y="372.300">click: handleClick</text>
<text class="m" x="716.400" y="401.100"><tspan class="g">}</tspan>,</text>
<text class="m" x="716.400" y="429.900">customFn: <tspan class="g">{</tspan></text>
<text class="m" x="739.500" y="458.700">formatMessage: formatMessage</text>
<text class="m" x="716.400" y="487.500"><tspan class="g">}</tspan></text>
<text class="m" x="693.300" y="516.300"><tspan class="b">}</tspan>;</text>
<text class="m" x="693.300" y="573.900"><tspan class="k">function</tspan> formatMessage<tspan class="b">(</tspan>label, value<tspan class="b">)</tspan> <tspan class="b">{</tspan></text>
<text class="m" x="716.400" y="602.700"><tspan class="k">return</tspan> <tspan class="s">`You selected </tspan>$<tspan class="g">{</tspan>label<tspan class="g">}</tspan><tspan class="s"> with value </tspan>$</text>
<text class="m" x="716.400" y="631.500"><tspan class="g">{</tspan>value<tspan class="g">}</tspan><tspan class="s">`</tspan>;</text>
<text class="m" x="693.300" y="660.300"><tspan class="b">}</tspan></text>
<text class="m" x="693.300" y="717.900"><tspan class="k">function</tspan> handleClick<tspan class="b">(</tspan>params, chart<tspan class="b">)</tspan> <tspan class="b">{</tspan></text>
<text class="m" x="716.400" y="746.700"><tspan class="k">const</tspan> label = params.name;</text>
<text class="m" x="716.400" y="775.500"><tspan class="k">const</tspan> value = params.value;</text>
<text class="m" x="716.400" y="833.100"><tspan class="k">const</tspan> message = chart._model.option.</text>
<text class="m" x="716.400" y="861.900">customFn.formatMessage<tspan class="g">(</tspan>label, value<tspan class="g">)</tspan>;</text>
<text class="m" x="716.400" y="890.700">console.log<tspan class="g">(</tspan>message<tspan class="g">)</tspan>;</text>
<text class="m" x="693.300" y="919.500"><tspan class="b">}</tspan></text>
</g>

<!-- collapse + drag circle -->
<circle cx="605" cy="173" r="23" fill="#5960b2"/>
<path d="M607.500 166.500L601 173.500L607.500 180.500" fill="none" stroke="#fff" stroke-width="2.600"/>
<circle cx="1197" cy="167" r="16" fill="#5960b2"/>
<path d="M1194.500 162.500v.01M1199.500 162.500v.01M1194.500 167v.01M1199.500 167v.01M1194.500 171.500v.01M1199.500 171.500v.01" stroke="#fff" stroke-width="2.800" stroke-linecap="round" fill="none"/>

<!-- chart -->
<g stroke="#e0e6f1" stroke-width="2" fill="none">
<path d="M1262 247.500H1734M1262 423H1734M1262 598.500H1734M1262 774H1734M1262 949.500H1734M1262 1125.500H1734"/>
</g>
<g fill="#5b70bf">
<rect x="1285" y="949.500" width="109" height="351.500"/>
<rect x="1443" y="598.500" width="109" height="702.500"/>
<rect x="1601" y="247.500" width="109" height="1053.500"/>
</g>
<path d="M1261 1302H1735M1262 1301V1311M1419.500 1301V1311M1577 1301V1311M1735 1301V1311" stroke="#6e7079" stroke-width="2" fill="none"/>
<g class="cy" text-anchor="end">
<text x="1247.500" y="254">30</text><text x="1247.500" y="430">25</text><text x="1247.500" y="605">20</text><text x="1247.500" y="781">15</text><text x="1247.500" y="956.500">10</text><text x="1247.500" y="1132.500">5</text><text x="1247.500" y="1308">0</text>
</g>
<g class="cy" text-anchor="middle">
<text x="1340" y="1330">A</text><text x="1497.600" y="1330">B</text><text x="1655" y="1330">C</text>
</g>

<!-- config -->
<rect x="1793" y="152" width="2" height="1380" fill="#e0e0e0"/>
<path d="M1823 173H1849M1823 193H1849M1829 183H1843" stroke="#000" stroke-width="2.400" fill="none"/>
<path d="M1831 178L1826 183L1831 188ZM1841 178L1846 183L1841 188Z" fill="#000"/>
<text transform="translate(1827 200) rotate(90)" font-size="21" font-weight="bold" fill="#111" textLength="65" lengthAdjust="spacingAndGlyphs">Config</text>

<!-- query -->
<rect x="608.500" y="1414" width="1184.500" height="64" fill="#cacaca"/>
<path d="M636 1443H646L641 1449Z" fill="#000"/>
<text x="665.500" y="1453" font-size="20" fill="#000" stroke="#000" stroke-width=".35" textLength="65.500" lengthAdjust="spacingAndGlyphs">Query</text>
<rect x="1563" y="1438" width="27" height="18" rx="9" fill="#777"/>
<circle cx="1564" cy="1447" r="12" fill="#fff"/>
<text x="1564" y="1452" font-size="13" fill="#888" text-anchor="middle" style="font-family:'Liberation Serif',serif;font-style:italic">fx</text>
<path d="M1611 1424H1757Q1773 1424 1773 1440V1452Q1773 1468 1757 1468H1611Z" fill="#5960b2"/>
<text x="1628" y="1453" font-size="20" fill="#fff" stroke="#fff" stroke-width=".25" textLength="129" lengthAdjust="spacingAndGlyphs">Custom SQL</text>
<rect x="608.500" y="1478" width="1184.500" height="54" fill="#fafafa"/>
<text class="ln" x="619" y="1498" style="fill:#0b216f">1</text>
<text class="m" x="643.500" y="1498" style="fill:#0000ff">select <tspan style="fill:#778899">*</tspan> from default</text>

<!-- devtools divider -->
<rect x="1875" y="0" width="9.500" height="1532" fill="#5960b2"/>

<!-- devtools top -->
<rect x="1884.500" y="0" width="1135.500" height="46" fill="#edf2fa"/>
<rect x="1884.500" y="46" width="1135.500" height="2" fill="#d3e3fd"/>
<path d="M1905 7h28v9M1905 7v28M1905 33h12M1933 7v0" fill="none" stroke="#444" stroke-width="2.500" stroke-dasharray="3.500 2.500"/>
<path d="M1920 17L1932 20L1926 23.500L1933 33" fill="none" stroke="#444" stroke-width="2.500"/>
<path d="M1961 31V9.500H1990V14" class="dv"/><rect x="1958" y="29.500" width="18" height="3" fill="#444"/><rect x="1978" y="15.500" width="11" height="16" rx="1.500" class="dv"/>
<path class="sep" d="M2011 5V35M2839 5V35"/>
<text class="dt" x="2036" y="31" textLength="106" lengthAdjust="spacingAndGlyphs">Elements</text>
<text class="dt" x="2185.500" y="31" textLength="92.500" lengthAdjust="spacingAndGlyphs" style="fill:#0b57d0">Console</text>
<path d="M2164 46V45Q2164 43 2167 43H2295Q2298 43 2298 45V46Z" fill="#0b57d0"/>
<text class="dt" x="2318.500" y="31" textLength="93" lengthAdjust="spacingAndGlyphs">Sources</text>
<text class="dt" x="2454.500" y="31" textLength="96.500" lengthAdjust="spacingAndGlyphs">Network</text>
<path d="M2581 11L2589 20L2581 29M2592 11L2601 20L2592 29" class="dv" stroke-width="2"/>
<path d="M2767 9h17q2 0 2 2v13q0 2-2 2H2770L2765 29V11q0-2 2-2Z" fill="#dc6f33"/><path d="M2775.500 12v8M2775.500 22v2" stroke="#fff" stroke-width="2.400" fill="none"/>
<text class="dt" x="2790.500" y="28" textLength="29" lengthAdjust="spacingAndGlyphs">98</text>
<path transform="translate(2860 4) scale(1.33)" fill="none" stroke="#444" stroke-width="1.900" d="M19.14 12.94c.04-.3.06-.61.06-.94 0-.32-.02-.64-.07-.94l2.03-1.58c.18-.14.23-.41.12-.61l-1.92-3.32c-.12-.22-.37-.29-.59-.22l-2.39.96c-.5-.38-1.03-.7-1.62-.94l-.36-2.54c-.04-.24-.24-.41-.48-.41h-3.84c-.24 0-.43.17-.47.41l-.36 2.54c-.59.24-1.13.57-1.62.94l-2.39-.96c-.22-.08-.47 0-.59.22L2.74 8.87c-.12.21-.08.47.12.61l2.03 1.58c-.05.3-.09.63-.09.94s.02.64.07.94l-2.03 1.58c-.18.14-.23.41-.12.61l1.92 3.32c.12.22.37.29.59.22l2.39-.96c.5.38 1.03.7 1.62.94l.36 2.54c.05.24.24.41.48.41h3.84c.24 0 .44-.17.47-.41l.36-2.54c.59-.24 1.13-.56 1.62-.94l2.39.96c.22.08.47 0 .59-.22l1.92-3.32c.12-.22.07-.47-.12-.61l-2.01-1.58z"/><circle cx="2876" cy="20" r="4" fill="#444"/>
<circle cx="2932" cy="11" r="2.800" fill="#444"/><circle cx="2932" cy="20" r="2.800" fill="#444"/><circle cx="2932" cy="29" r="2.800" fill="#444"/>
<path d="M2977 14L2995 29M2995 14L2977 29" class="dv"/>

<!-- devtools toolbar -->
<rect x="1905" y="61" width="26" height="27" rx="2" class="dv"/><path d="M1916.500 61V88" class="dv"/><path d="M1920.500 68.500L1927 74.500L1920.500 80.500Z" fill="#444"/>
<circle cx="1974" cy="74" r="13" class="dv"/><path d="M1965 85L1983 63" class="dv"/>
<path class="sep" d="M2011 58V90M2121.500 58V90M2195.500 58V90M2706 58V90M3011 58V90"/>
<text class="dt" x="2036" y="82" textLength="37" lengthAdjust="spacingAndGlyphs">top</text>
<path d="M2082 71H2098L2090 83Z" fill="#444"/>
<path d="M2142 74Q2158 52 2176 74Q2158 96 2142 74Z" class="dv"/><circle cx="2158.500" cy="74" r="6" class="dv"/>
<rect x="2211" y="54" width="271" height="40" rx="20" fill="#edf2fa"/>
<path d="M2235 66H2252L2246 74V83H2241V74Z" class="dv" stroke-width="2.200"/>
<text class="dt" x="2267.600" y="82" textLength="56" lengthAdjust="spacingAndGlyphs">Filter</text>
<text class="dt" x="2504" y="82" textLength="153" lengthAdjust="spacingAndGlyphs">Default levels</text>
<path d="M2667 71H2684L2675.500 83Z" fill="#444"/>
<text class="dt" x="2718" y="82" textLength="129" lengthAdjust="spacingAndGlyphs">265 Issues:</text>
<path d="M2864 63h17q2 0 2 2v14q0 2-2 2H2867L2862 84V65q0-2 2-2Z" fill="#dc6f33"/><path d="M2872.500 66v9M2872.500 77v2" stroke="#fff" stroke-width="2.400" fill="none"/>
<text class="dt" x="2886.500" y="82" textLength="29.500" lengthAdjust="spacingAndGlyphs">98</text>
<path d="M2934 63h16q2 0 2 2v14q0 2-2 2H2937L2932 84V65q0-2 2-2Z" fill="#1a73e8"/><path d="M2936 67.500H2948M2936 72H2948M2936 76.500H2943" stroke="#fff" stroke-width="2" fill="none"/>
<text class="dt" x="2956" y="82" textLength="39.500" lengthAdjust="spacingAndGlyphs">167</text>
<path transform="translate(1900 110) scale(1.33)" fill="none" stroke="#444" stroke-width="1.900" d="M19.14 12.94c.04-.3.06-.61.06-.94 0-.32-.02-.64-.07-.94l2.03-1.58c.18-.14.23-.41.12-.61l-1.92-3.32c-.12-.22-.37-.29-.59-.22l-2.39.96c-.5-.38-1.03-.7-1.62-.94l-.36-2.54c-.04-.24-.24-.41-.48-.41h-3.84c-.24 0-.43.17-.47.41l-.36 2.54c-.59.24-1.13.57-1.62.94l-2.39-.96c-.22-.08-.47 0-.59.22L2.74 8.87c-.12.21-.08.47.12.61l2.03 1.58c-.05.3-.09.63-.09.94s.02.64.07.94l-2.03 1.58c-.18.14-.23.41-.12.61l1.92 3.32c.12.22.37.29.59.22l2.39-.96c.5.38 1.03.7 1.62.94l.36 2.54c.05.24.24.41.48.41h3.84c.24 0 .44-.17.47-.41l.36-2.54c.59-.24 1.13-.56 1.62-.94l2.39.96c.22.08.47 0 .59-.22l1.92-3.32c.12-.22.07-.47-.12-.61l-2.01-1.58z"/><circle cx="1916" cy="126" r="4" fill="#444"/>
<rect x="1884.500" y="152" width="1135.500" height="2.500" fill="#d3e3fd"/>

<!-- console -->
<text class="m" x="1942" y="185" style="font-size:22px;fill:#1f1f1f" textLength="371">You selected A with value 10</text>
<text class="m" x="2853" y="185" style="font-size:22px;fill:#1a56c8" textLength="105.500">VM1445:8</text>
<rect x="2853" y="187.500" width="105.500" height="2" fill="#1a56c8"/>
<path d="M1911.500 217L1919 224.500L1911.500 232" fill="none" stroke="#2f66e0" stroke-width="2"/>
</svg>
</body></html>
